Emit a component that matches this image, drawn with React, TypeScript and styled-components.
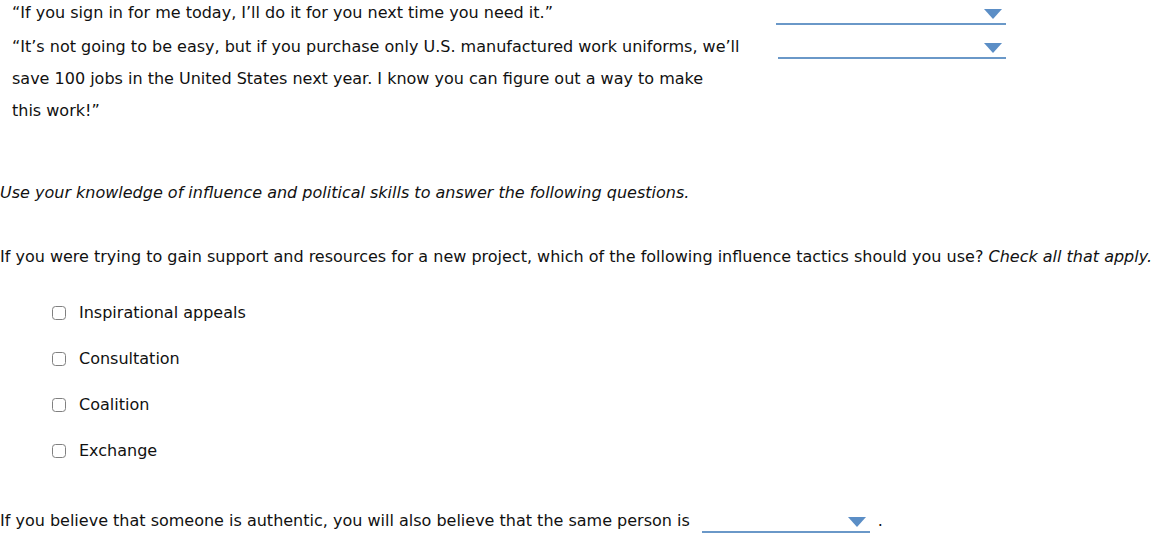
import React from "react";
import styled, { createGlobalStyle } from "styled-components";

const GlobalStyle = createGlobalStyle`
  html, body {
    margin: 0;
    padding: 0;
    background: #fff;
  }
  body {
    font-family: "DejaVu Sans", Verdana, sans-serif;
    font-size: 16px;
    color: #111;
  }
`;

const Page = styled.div`
  width: 1176px;
  height: 546px;
  overflow: hidden;
`;

const MatchTable = styled.div`
  display: grid;
  grid-template-columns: 752px 232px;
  column-gap: 12px;
  row-gap: 2px;
  padding-left: 12px;
  margin-top: -3px;
`;

const Quote = styled.div`
  line-height: 32px;
`;

const SelectCell = styled.div<{ $offset?: number }>`
  padding-top: 1px;
  padding-left: ${(p) => p.$offset || 0}px;
`;

const Select = styled.div<{ $width: number }>`
  position: relative;
  width: ${(p) => p.$width}px;
  height: 27px;
  border-bottom: 2px solid #6a98c8;
  box-sizing: border-box;
`;

const Arrow = styled.span`
  position: absolute;
  right: 4px;
  top: 11px;
  width: 0;
  height: 0;
  border-left: 9px solid transparent;
  border-right: 9px solid transparent;
  border-top: 10px solid #5b8ec6;
`;

const Instruction = styled.p`
  margin: 50px 0 0;
  font-style: italic;
  line-height: 32px;
`;

const Question = styled.p`
  margin: 32px 0 0;
  line-height: 32px;
  white-space: nowrap;
`;

const Options = styled.div`
  display: flex;
  flex-direction: column;
  gap: 14px;
  padding-left: 52px;
  margin-top: 24px;
`;

const Option = styled.label`
  display: flex;
  align-items: center;
  gap: 13px;
  line-height: 32px;
`;

const Box = styled.span`
  width: 14px;
  height: 14px;
  box-sizing: border-box;
  border: 1px solid #808080;
  border-radius: 3.5px;
  background: #fff;
`;

const FillLine = styled.p`
  margin: 38px 0 0;
  display: flex;
  align-items: center;
  line-height: 32px;
`;

const Inline = styled.span`
  display: inline-block;
  margin: 0 8px 0 12px;
  padding-bottom: 3px;
`;

const options = ["Inspirational appeals", "Consultation", "Coalition", "Exchange"];

export default function App() {
  return (
    <Page>
      <GlobalStyle />
      <MatchTable>
        <Quote>“If you sign in for me today, I’ll do it for you next time you need it.”</Quote>
        <SelectCell>
          <Select $width={230}>
            <Arrow />
          </Select>
        </SelectCell>
        <Quote>
          “It’s not going to be easy, but if you purchase only U.S. manufactured work uniforms, we’ll
          save 100 jobs in the United States next year. I know you can figure out a way to make
          <br />
          this work!”
        </Quote>
        <SelectCell $offset={2}>
          <Select $width={228}>
            <Arrow />
          </Select>
        </SelectCell>
      </MatchTable>
      <Instruction>Use your knowledge of influence and political skills to answer the following questions.</Instruction>
      <Question>
        If you were trying to gain support and resources for a new project, which of the following
        influence tactics should you use? <i>Check all that apply.</i>
      </Question>
      <Options>
        {options.map((o) => (
          <Option key={o}>
            <Box />
            {o}
          </Option>
        ))}
      </Options>
      <FillLine>
        If you believe that someone is authentic, you will also believe that the same person is
        <Inline>
          <Select $width={168}>
            <Arrow />
          </Select>
        </Inline>
        .
      </FillLine>
    </Page>
  );
}
